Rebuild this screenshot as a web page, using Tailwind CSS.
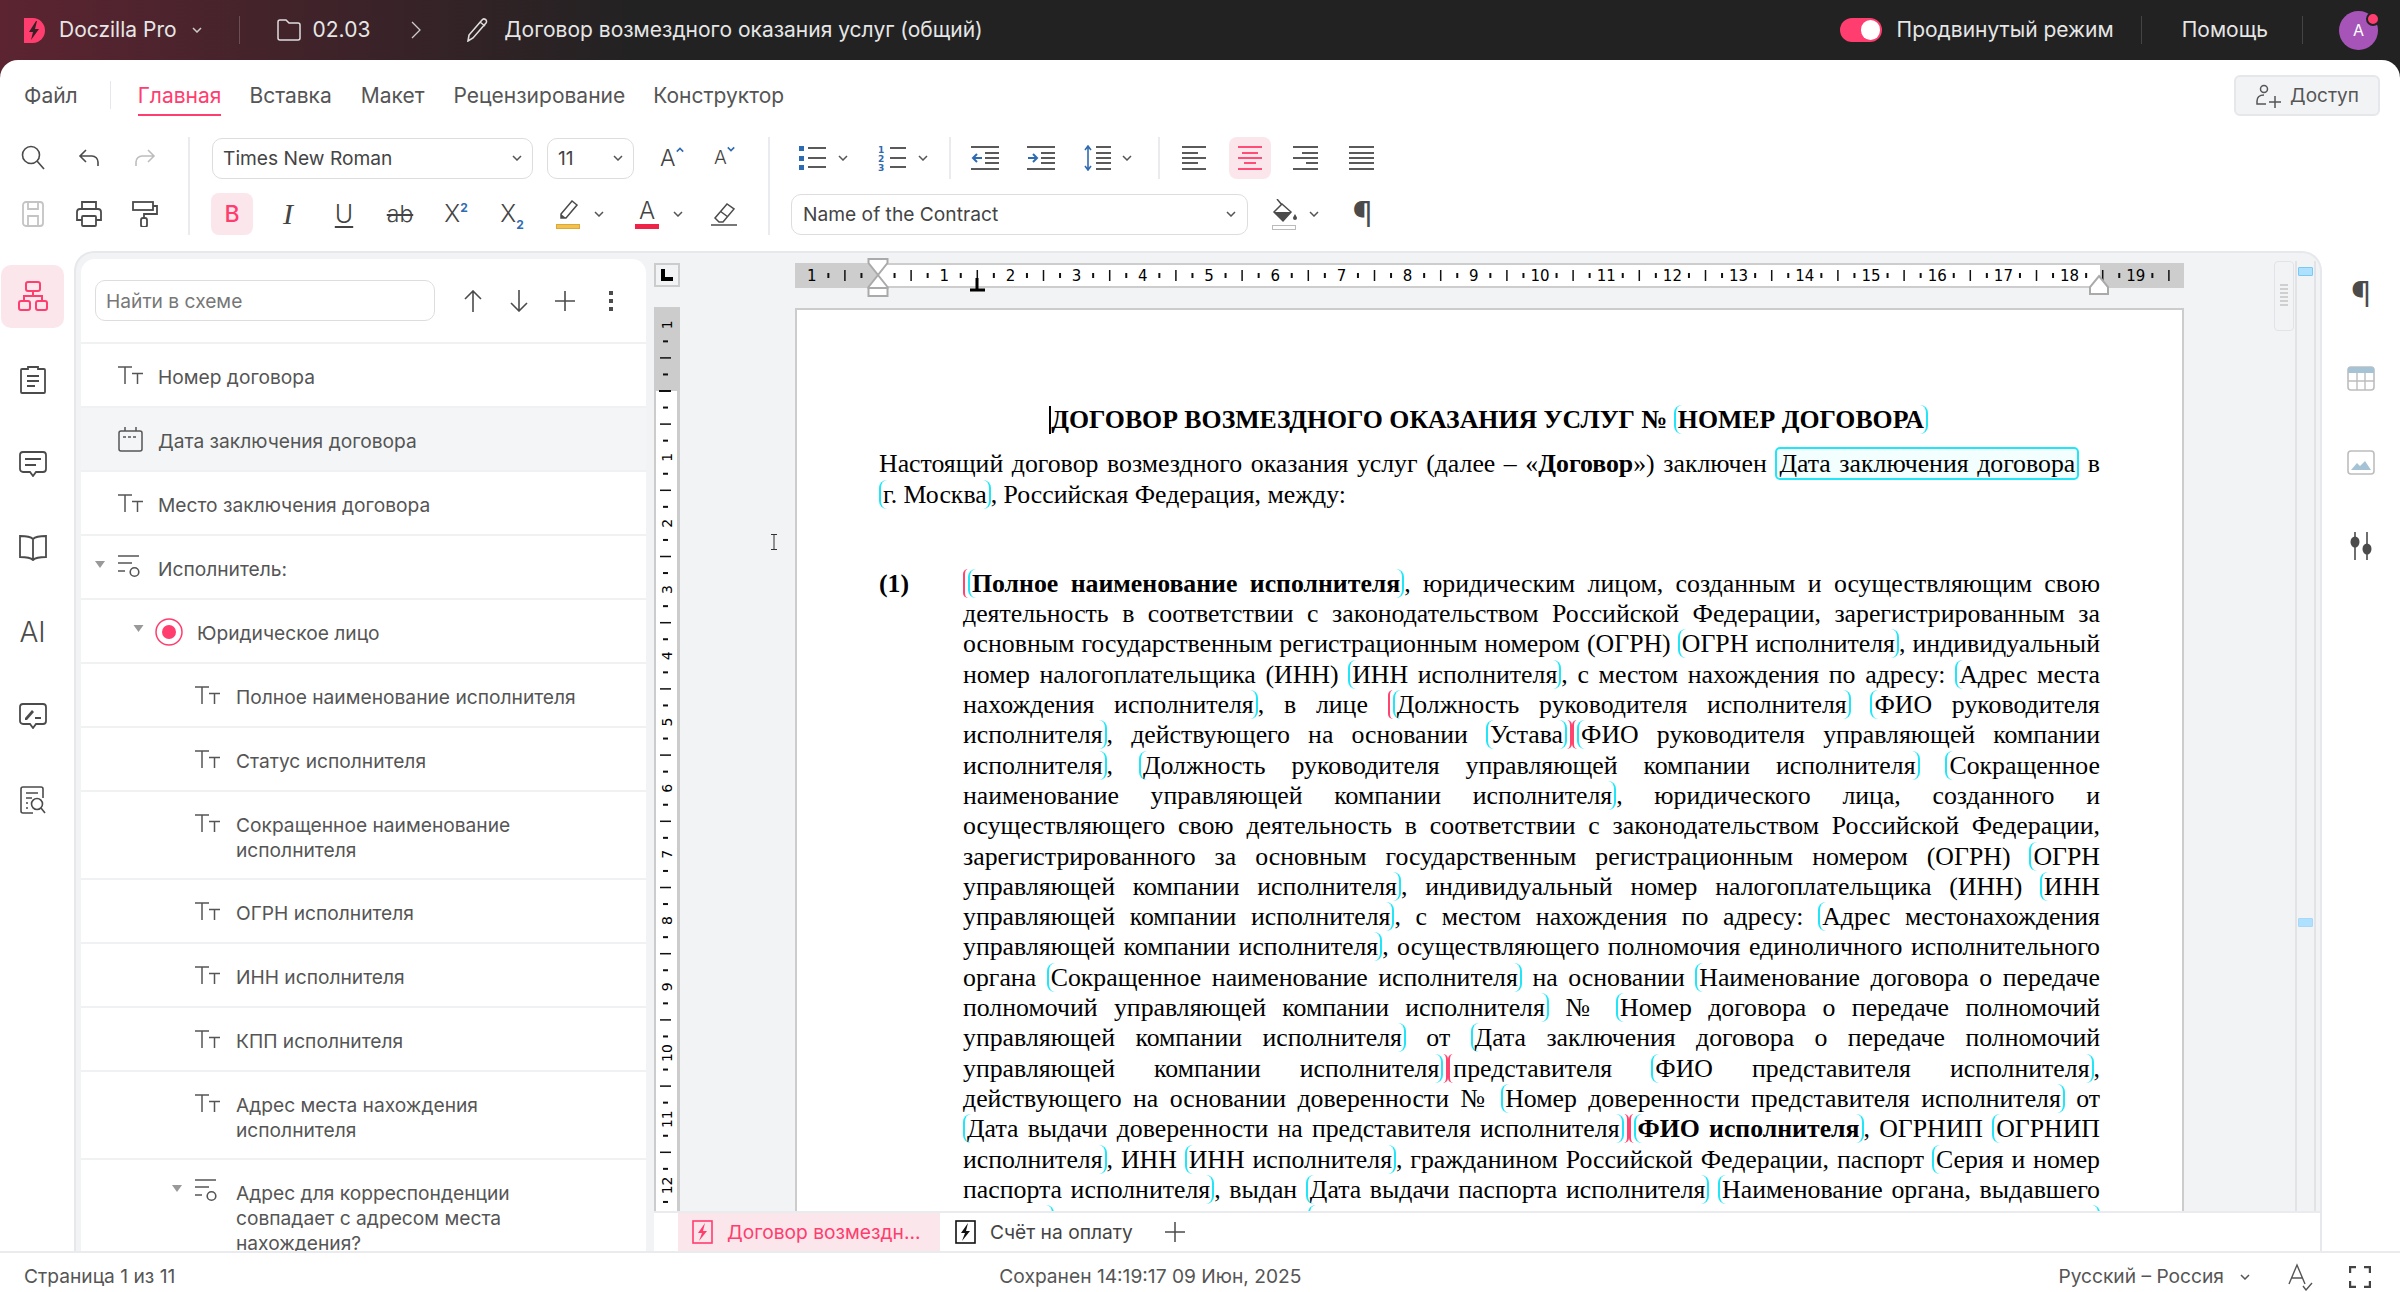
<!DOCTYPE html>
<html lang="ru">
<head>
<meta charset="UTF-8">
<title>Doczilla Pro</title>
<script src="https://cdn.jsdelivr.net/npm/@tailwindcss/browser@4"></script>
</head>
<body class="w-[2400px] h-[1292px] overflow-hidden flex flex-col font-[Inter,sans-serif] text-[20px] text-[#444] bg-[linear-gradient(90deg,#5c2431_0px,#222222_640px)]">

<svg class="hidden">
  <symbol id="tt" viewBox="0 0 25 18"><g fill="none" stroke="#555" stroke-width="1.5"><path d="M0 1H14M7 1V18M14 7.5H25M19.5 7.5V18"/></g></symbol>
  <symbol id="grp" viewBox="0 0 22 24"><g fill="none" stroke="#555" stroke-width="1.6"><path d="M0 1H21M0 8H14M0 16H7"/><circle cx="16.5" cy="17" r="4.3"/></g></symbol>
  <symbol id="chev" viewBox="0 0 10 6"><path d="M1 1l4 4 4-4" fill="none" stroke="#555" stroke-width="1.5"/></symbol>
  <symbol id="tri" viewBox="0 0 10 7"><path d="M0 0H10L5 7Z" fill="#999"/></symbol>
</svg>

<!-- top bar -->
<header class="h-[60px] shrink-0 flex items-center text-[21px] text-[#e6e6e6]">
  <svg class="ml-[24px] w-[21px] h-[25px]" viewBox="0 0 21 25"><path d="M0 0H9a12 12.500 0 0 1 0 25H0Z" fill="#ff3d6e"/><path d="M12 3L5 14h4l-2 8 8-11h-4l2-8Z" fill="#3a1f25"/></svg>
  <span class="ml-[14px]">Doczilla Pro</span>
  <svg class="ml-[15px] w-[10px] h-[6px]" viewBox="0 0 10 6"><path d="M1 1l4 4 4-4" fill="none" stroke="#ccc" stroke-width="1.5"/></svg>
  <div class="ml-[37px] w-px h-[28px] bg-[#6a5055]"></div>
  <svg class="ml-[37px] w-[24px] h-[22px]" viewBox="0 0 24 22"><path d="M1 3a2 2 0 0 1 2-2h6l3 3h9a2 2 0 0 1 2 2v13a2 2 0 0 1-2 2H3a2 2 0 0 1-2-2Z" fill="none" stroke="#ddd" stroke-width="1.5"/></svg>
  <span class="ml-[12px]">02.03</span>
  <svg class="ml-[41px] w-[10px] h-[18px]" viewBox="0 0 10 18"><path d="M1 1l8 8-8 8" fill="none" stroke="#ccc" stroke-width="1.3"/></svg>
  <svg class="ml-[44px] w-[24px] h-[24px]" viewBox="0 0 24 24"><path d="M3 23l1-6L17 2a2.500 2.500 0 0 1 4 3L8 20Z M15 4l5 4" fill="none" stroke="#ddd" stroke-width="1.6"/></svg>
  <span class="ml-[15px]">Договор возмездного оказания услуг (общий)</span>
  <div class="ml-auto w-[42px] h-[24px] rounded-full bg-[#ff3d6e] flex items-center justify-end pr-[2px]"><div class="w-[19px] h-[20px] rounded-full bg-white"></div></div>
  <span class="ml-[15px]">Продвинутый режим</span>
  <div class="ml-[27px] w-px h-[28px] bg-[#444]"></div>
  <span class="ml-[40px]">Помощь</span>
  <div class="ml-[34px] w-px h-[28px] bg-[#444]"></div>
  <div class="relative ml-[36px] mr-[22px] w-[39px] h-[39px] rounded-full bg-[#a654b8] flex items-center justify-center text-[16px] text-white">A
    <div class="absolute top-[1px] right-[-2px] w-[14px] h-[14px] rounded-full bg-[#ff3d6e] border-2 border-[#222]"></div>
  </div>
</header>

<main class="flex-1 min-h-0 flex flex-col bg-white rounded-t-[18px]">
  <!-- menu tabs -->
  <nav class="h-[77px] shrink-0 flex items-start pt-[24px] text-[21px] leading-[24px] text-[#555]">
    <span class="ml-[24px]">Файл</span>
    <div class="ml-[32px] w-px h-[28px] mt-[-3px] bg-[#e5e7ea]"></div>
    <span class="ml-[27px] pb-[6px] border-b-2 border-[#ff3d6e] text-[#ff3d6e]">Главная</span>
    <span class="ml-[28px]">Вставка</span>
    <span class="ml-[29px]">Макет</span>
    <span class="ml-[29px]">Рецензирование</span>
    <span class="ml-[28px]">Конструктор</span>
    <button class="ml-auto mr-[20px] mt-[-9px] w-[146px] h-[41px] flex items-center justify-center gap-[9px] rounded-[6px] bg-[#f2f3f5] border-2 border-[#e5e7ea] text-[#555] text-[19px]">
      <svg class="w-[26px] h-[24px]" viewBox="0 0 26 24"><g fill="none" stroke="#555" stroke-width="1.5"><circle cx="9" cy="5" r="3.500"/><path d="M9 11c-5 0-7 3-7 6v3h9M14 18H26M20 12V24"/></g></svg>Доступ
    </button>
  </nav>

  <!-- toolbar -->
  <div class="h-[98px] mb-[16px] shrink-0 flex">
    <div class="w-[188px] flex flex-col justify-between pl-[5px]">
      <div class="flex h-[42px]">
        <div class="w-[56px] flex items-center justify-center"><svg class="w-[24px] h-[26px]" viewBox="0 0 24 26"><g fill="none" stroke="#4b4b4b" stroke-width="1.6"><circle cx="10" cy="10" r="8.500"/><path d="M16 16l7 8"/></g></svg></div>
        <div class="w-[56px] flex items-center justify-center"><svg class="w-[22px] h-[18px]" viewBox="0 0 22 18"><path d="M8 1L2 7l6 6M2 7H14a6 6 0 0 1 6 6v4" fill="none" stroke="#4b4b4b" stroke-width="1.6"/></svg></div>
        <div class="w-[56px] flex items-center justify-center"><svg class="w-[22px] h-[18px]" viewBox="0 0 22 18"><path d="M14 1l6 6-6 6M20 7H8a6 6 0 0 0-6 6v4" fill="none" stroke="#bdbdbd" stroke-width="1.6"/></svg></div>
      </div>
      <div class="flex h-[42px]">
        <div class="w-[56px] flex items-center justify-center"><svg class="w-[22px] h-[26px]" viewBox="0 0 22 26"><g fill="none" stroke="#c4c4c4" stroke-width="1.800"><rect x="1" y="1" width="20" height="24" rx="3"/><path d="M6 1V8H16V1M6 25V15H16V25"/></g></svg></div>
        <div class="w-[56px] flex items-center justify-center"><svg class="w-[26px] h-[26px]" viewBox="0 0 26 26"><g fill="none" stroke="#4b4b4b" stroke-width="1.800"><path d="M6 8V1H20V8M6 19H1V11a3 3 0 0 1 3-3H22a3 3 0 0 1 3 3V19H20"/><rect x="6" y="15" width="14" height="10" rx="1"/></g></svg></div>
        <div class="w-[56px] flex items-center justify-center"><svg class="w-[26px] h-[26px]" viewBox="0 0 26 26"><g fill="none" stroke="#4b4b4b" stroke-width="1.800"><rect x="1" y="1" width="20" height="8"/><path d="M21 5h4v8H12v4"/><rect x="9" y="17" width="6" height="9" rx="2"/></g></svg></div>
      </div>
    </div>
    <div class="w-[2px] bg-[#e9ebee]"></div>
    <div class="w-[578px] flex flex-col justify-between">
      <div class="flex items-center h-[42px]">
        <div class="ml-[22px] w-[321px] h-[41px] flex items-center justify-between px-[10px] rounded-[10px] border border-[#ddd] text-[19.200px]">Times New Roman<svg class="w-[10px] h-[6px]"><use href="#chev"/></svg></div>
        <div class="ml-[14px] w-[87px] h-[41px] flex items-center justify-between px-[10px] rounded-[10px] border border-[#ddd] text-[19.200px]">11<svg class="w-[10px] h-[6px]"><use href="#chev"/></svg></div>
        <div class="ml-[26px] w-[26px] flex items-start text-[23px] font-light leading-[26px]">A<svg class="w-[8px] h-[6px] mt-[2px]" viewBox="0 0 10 6"><path d="M1 5l4-4 4 4" fill="none" stroke="#2f6bb0" stroke-width="2"/></svg></div>
        <div class="ml-[28px] w-[26px] flex items-start text-[19px] font-light leading-[26px]">A<svg class="w-[8px] h-[6px] mt-[1px]" viewBox="0 0 10 6"><path d="M1 1l4 4 4-4" fill="none" stroke="#2f6bb0" stroke-width="2"/></svg></div>
      </div>
      <div class="flex items-center h-[42px] pl-[14px]">
        <div class="w-[56px] flex justify-center"><span class="w-[42px] h-[42px] rounded-[8px] bg-[#fbe6ec] flex items-center justify-center text-[#ff3d6e] text-[23px] font-medium">B</span></div>
        <div class="w-[56px] text-center text-[30px] leading-[34px] font-['Liberation_Serif',serif] italic">I</div>
        <div class="w-[56px] text-center text-[25px] leading-[34px] font-light underline underline-offset-[3px]">U</div>
        <div class="w-[56px] text-center text-[23px] font-light line-through">ab</div>
        <div class="w-[56px] flex justify-center text-[24px] font-light leading-[28px]">X<sup class="text-[12px] font-bold text-[#2f6bb0] top-[-2px] leading-[20px]">2</sup></div>
        <div class="w-[56px] flex justify-center text-[24px] font-light leading-[28px]">X<sub class="text-[12px] font-bold text-[#2f6bb0] top-[20px] leading-[10px]">2</sub></div>
        <div class="w-[56px] flex flex-col items-center"><svg class="w-[22px] h-[22px]" viewBox="0 0 22 22"><path d="M4 14L15 1l5 4L9 18H4Z" fill="none" stroke="#4b4b4b" stroke-width="1.5"/><path d="M4 14l5 4H4Z" fill="#4b4b4b"/></svg><div class="w-[24px] h-[5px] mt-[2px] bg-[#f2c14e] border border-[#d9a93a]"></div></div>
        <svg class="ml-[-2px] w-[10px] h-[6px]"><use href="#chev"/></svg>
        <div class="ml-[15px] w-[56px] flex flex-col items-center text-[24px] font-light leading-[24px]">A<div class="w-[24px] h-[5px] mt-[1px] bg-[#ef2348]"></div></div>
        <svg class="ml-[-2px] w-[10px] h-[6px]"><use href="#chev"/></svg>
        <div class="ml-[13px] w-[56px] flex justify-center"><svg class="w-[26px] h-[24px]" viewBox="0 0 26 24"><g fill="none" stroke="#4b4b4b" stroke-width="1.5"><path d="M4 16L16 2l7 5-11 13H8ZM9 9l8 6"/><path d="M0 23H26"/></g></svg></div>
      </div>
    </div>
    <div class="w-[2px] bg-[#e9ebee]"></div>
    <div class="flex-1 flex flex-col justify-between">
      <div class="flex items-center h-[42px]">
        <svg class="ml-[29px] w-[27px] h-[24px]" viewBox="0 0 27 24"><path d="M0 0H5V5H0ZM0 10H5V15H0ZM0 19H5V24H0Z" fill="#2f6bb0"/><path d="M9 2H27M9 12H27M9 21H27" stroke="#5a5a5a" stroke-width="2"/></svg>
        <svg class="ml-[12px] w-[10px] h-[6px]"><use href="#chev"/></svg>
        <svg class="ml-[30px] w-[28px] h-[26px]" viewBox="0 0 28 26"><g fill="#2f6bb0" font-size="9" font-weight="700" font-family="DejaVu Sans"><text x="0" y="8">1</text><text x="0" y="17">2</text><text x="0" y="26">3</text></g><path d="M12 3H28M12 13H28M12 22H28" stroke="#5a5a5a" stroke-width="2"/></svg>
        <svg class="ml-[12px] w-[10px] h-[6px]"><use href="#chev"/></svg>
        <div class="ml-[21px] w-[2px] h-[42px] bg-[#e9ebee]"></div>
        <svg class="ml-[20px] w-[28px] h-[24px]" viewBox="0 0 28 24"><path d="M0 1H28M14 7H28M14 12H28M14 17H28M0 23H28" stroke="#5a5a5a" stroke-width="2"/><path d="M11 12H2M6 8l-4 4 4 4" fill="none" stroke="#2f6bb0" stroke-width="2"/></svg>
        <svg class="ml-[28px] w-[28px] h-[24px]" viewBox="0 0 28 24"><path d="M0 1H28M14 7H28M14 12H28M14 17H28M0 23H28" stroke="#5a5a5a" stroke-width="2"/><path d="M1 12H10M6 8l4 4-4 4" fill="none" stroke="#2f6bb0" stroke-width="2"/></svg>
        <svg class="ml-[29px] w-[27px] h-[26px]" viewBox="0 0 27 26"><path d="M12 2H27M12 8H27M12 13H27M12 18H27M12 24H27" stroke="#5a5a5a" stroke-width="2"/><path d="M4 2V24M1 5l3-4 3 4M1 21l3 4 3-4" fill="none" stroke="#2f6bb0" stroke-width="1.6"/></svg>
        <svg class="ml-[11px] w-[10px] h-[6px]"><use href="#chev"/></svg>
        <div class="ml-[26px] w-[2px] h-[42px] bg-[#e9ebee]"></div>
        <svg class="ml-[22px] w-[24px] h-[24px]" viewBox="0 0 24 24"><path d="M0 1H24M0 7H16M0 12H24M0 17H16M0 23H24" stroke="#5a5a5a" stroke-width="2"/></svg>
        <div class="ml-[23px] w-[42px] h-[42px] rounded-[8px] bg-[#fbe6ec] flex items-center justify-center"><svg class="w-[24px] h-[24px]" viewBox="0 0 24 24"><path d="M0 1H24M4 7H20M0 12H24M6 17H18M0 23H24" stroke="#ff4d78" stroke-width="2"/></svg></div>
        <svg class="ml-[22px] w-[25px] h-[24px]" viewBox="0 0 25 24"><path d="M0 1H25M9 7H25M0 12H25M13 17H25M0 23H25" stroke="#5a5a5a" stroke-width="2"/></svg>
        <svg class="ml-[31px] w-[25px] h-[24px]" viewBox="0 0 25 24"><path d="M0 1H25M0 7H25M0 12H25M0 17H25M0 23H25" stroke="#5a5a5a" stroke-width="2"/></svg>
      </div>
      <div class="flex items-center h-[42px]">
        <div class="ml-[21px] w-[457px] h-[41px] flex items-center justify-between px-[11px] rounded-[10px] border border-[#ddd] text-[19.200px]">Name of the Contract<svg class="w-[10px] h-[6px]"><use href="#chev"/></svg></div>
        <div class="ml-[23px] w-[26px] flex flex-col items-center"><svg class="w-[26px] h-[24px]" viewBox="0 0 26 24"><path d="M6 0l5 6M11 5l9 8-8 9-9-9Z" fill="none" stroke="#4b4b4b" stroke-width="1.5"/><path d="M3 13H20l-8 9Z" fill="#4b4b4b"/><path d="M24 15c-1 2-2 3-2 4a2 2 0 0 0 4 0c0-1-1-2-2-4Z" fill="#4b4b4b"/></svg><div class="w-[24px] h-[5px] mt-[2px] bg-white border border-[#bbb]"></div></div>
        <svg class="ml-[12px] w-[10px] h-[6px]"><use href="#chev"/></svg>
        <div class="ml-[33px] text-[36px] font-light leading-[30px] text-[#4b4b4b]">¶</div>
      </div>
    </div>
  </div>

  <div class="flex-1 min-h-0 flex">
    <!-- left rail -->
    <aside class="w-[74px] shrink-0 flex flex-col pt-[3px] pl-px">
      <div class="w-[63px] h-[84px] flex items-center justify-center"><div class="w-[63px] h-[63px] rounded-[10px] bg-[#fbe6ec] flex items-center justify-center"><svg class="w-[30px] h-[30px]" viewBox="0 0 30 30"><g fill="none" stroke="#ff3d6e" stroke-width="2"><rect x="8" y="1" width="14" height="9" rx="2"/><rect x="1" y="20" width="11" height="9" rx="2"/><rect x="18" y="20" width="11" height="9" rx="2"/><path d="M15 10V15M6 20V15H24V20"/></g></svg></div></div>
      <div class="w-[63px] h-[84px] flex items-center justify-center"><svg class="w-[26px] h-[28px]" viewBox="0 0 26 28"><g fill="none" stroke="#4b4b4b" stroke-width="1.8"><path d="M8 3H2a1 1 0 0 0-1 1V26a1 1 0 0 0 1 1H24a1 1 0 0 0 1-1V4a1 1 0 0 0-1-1H18V1H8ZM7 10H19M7 15H19M7 20H15"/></g></svg></div>
      <div class="w-[63px] h-[84px] flex items-center justify-center"><svg class="w-[28px] h-[26px]" viewBox="0 0 28 26"><g fill="none" stroke="#4b4b4b" stroke-width="1.8"><path d="M4 1H24a3 3 0 0 1 3 3V18a3 3 0 0 1-3 3H17l-3 4-3-4H4a3 3 0 0 1-3-3V4a3 3 0 0 1 3-3ZM6 8H22M6 14H17"/></g></svg></div>
      <div class="w-[63px] h-[84px] flex items-center justify-center"><svg class="w-[28px] h-[26px]" viewBox="0 0 28 26"><g fill="none" stroke="#4b4b4b" stroke-width="1.8"><path d="M14 4C12 2 8 1 1 1V22C8 22 12 23 14 25 16 23 20 22 27 22V1C20 1 16 2 14 4ZM14 4V25"/></g></svg></div>
      <div class="w-[63px] h-[84px] flex items-center justify-center text-[28px] font-light text-[#4b4b4b]">AI</div>
      <div class="w-[63px] h-[84px] flex items-center justify-center"><svg class="w-[28px] h-[26px]" viewBox="0 0 28 26"><g fill="none" stroke="#4b4b4b" stroke-width="1.8"><path d="M4 1H24a3 3 0 0 1 3 3V18a3 3 0 0 1-3 3H17l-3 4-3-4H4a3 3 0 0 1-3-3V4a3 3 0 0 1 3-3ZM16 15H22"/></g><path d="M6 15l7-8 2 2-7 8H6Z" fill="#4b4b4b"/></svg></div>
      <div class="w-[63px] h-[84px] flex items-center justify-center"><svg class="w-[26px] h-[28px]" viewBox="0 0 26 28"><g fill="none" stroke="#4b4b4b" stroke-width="1.6"><path d="M13 27H3a2 2 0 0 1-2-2V3a2 2 0 0 1 2-2H21a2 2 0 0 1 2 2V12M6 7H18M6 12H12M6 17H8M6 22H8"/><circle cx="17" cy="18" r="5.500"/><path d="M21 22l4 5"/></g></svg></div>
    </aside>

    <!-- workspace -->
    <section class="w-[2248px] shrink-0 flex bg-[#f2f3f5] border-t-2 border-l-2 border-r-2 border-[#e6e8eb] rounded-t-[20px] overflow-hidden">
      <!-- schema panel -->
      <div class="ml-[5px] mt-[6px] w-[565px] shrink-0 bg-white rounded-t-[14px] overflow-hidden text-[19.200px] leading-[25px] text-[#555]">
        <div class="h-[85px] border-b-2 border-[#f0f1f3] pt-[21px] pl-[14px] flex items-start">
          <div class="w-[340px] h-[41px] rounded-[10px] border border-[#ddd] flex items-center pl-[10px] pt-px text-[#777]">Найти в схеме</div>
          <svg class="ml-[29px] mt-[10px] w-[18px] h-[22px]" viewBox="0 0 18 22"><path d="M9 22V1M1 9l8-8 8 8" fill="none" stroke="#4b4b4b" stroke-width="1.6"/></svg>
          <svg class="ml-[28px] mt-[10px] w-[18px] h-[22px]" viewBox="0 0 18 22"><path d="M9 0V21M1 13l8 8 8-8" fill="none" stroke="#4b4b4b" stroke-width="1.6"/></svg>
          <svg class="ml-[26px] mt-[10px] w-[22px] h-[22px]" viewBox="0 0 22 22"><path d="M11 1V21M1 11H21" stroke="#4b4b4b" stroke-width="1.6"/></svg>
          <svg class="ml-[33px] mt-[11px] w-[4px] h-[20px]" viewBox="0 0 4 20"><path d="M0 0H4V4H0ZM0 8H4V12H0ZM0 16H4V20H0Z" fill="#4b4b4b"/></svg>
        </div>
        <div class="flex h-[64px] border-b-2 border-[#f0f1f3] pt-[21px] pl-[37px]"><svg class="w-[25px] h-[18px] mt-px mr-[15px]"><use href="#tt"/></svg>Номер договора</div>
        <div class="flex h-[64px] border-b-2 border-[#f0f1f3] pt-[21px] pl-[37px] bg-[#f4f5f7]"><svg class="w-[25px] h-[25px] mt-[-2px] mr-[15px]" viewBox="0 0 25 25"><g fill="none" stroke="#555" stroke-width="1.5"><rect x="1" y="4" width="23" height="20" rx="2"/><path d="M7 0V4M18 0V4"/><path d="M5 10H20" stroke-dasharray="3 2"/></g></svg>Дата заключения договора</div>
        <div class="flex h-[64px] border-b-2 border-[#f0f1f3] pt-[21px] pl-[37px]"><svg class="w-[25px] h-[18px] mt-px mr-[15px]"><use href="#tt"/></svg>Место заключения договора</div>
        <div class="flex h-[64px] border-b-2 border-[#f0f1f3] pt-[21px] pl-[14px]"><svg class="w-[10px] h-[7px] mt-[4px] mr-[13px]"><use href="#tri"/></svg><svg class="w-[22px] h-[24px] mt-[-2px] mr-[18px]"><use href="#grp"/></svg>Исполнитель:</div>
        <div class="flex h-[64px] border-b-2 border-[#f0f1f3] pt-[21px] pl-[52px]"><svg class="w-[11px] h-[7px] mt-[4px] mr-[11px]"><use href="#tri"/></svg><svg class="w-[28px] h-[28px] mt-[-3px] mr-[14px]" viewBox="0 0 28 28"><circle cx="14" cy="14" r="13" fill="none" stroke="#ff3d6e" stroke-width="1.5"/><circle cx="14" cy="14" r="7" fill="#ff3d6e"/></svg>Юридическое лицо</div>
        <div class="flex h-[64px] border-b-2 border-[#f0f1f3] pt-[21px] pl-[114px]"><svg class="w-[25px] h-[18px] mt-px mr-[16px]"><use href="#tt"/></svg>Полное наименование исполнителя</div>
        <div class="flex h-[64px] border-b-2 border-[#f0f1f3] pt-[21px] pl-[114px]"><svg class="w-[25px] h-[18px] mt-px mr-[16px]"><use href="#tt"/></svg>Статус исполнителя</div>
        <div class="flex h-[88px] border-b-2 border-[#f0f1f3] pt-[21px] pl-[114px]"><svg class="w-[25px] h-[18px] mt-px mr-[16px]"><use href="#tt"/></svg><span>Сокращенное наименование<br>исполнителя</span></div>
        <div class="flex h-[64px] border-b-2 border-[#f0f1f3] pt-[21px] pl-[114px]"><svg class="w-[25px] h-[18px] mt-px mr-[16px]"><use href="#tt"/></svg>ОГРН исполнителя</div>
        <div class="flex h-[64px] border-b-2 border-[#f0f1f3] pt-[21px] pl-[114px]"><svg class="w-[25px] h-[18px] mt-px mr-[16px]"><use href="#tt"/></svg>ИНН исполнителя</div>
        <div class="flex h-[64px] border-b-2 border-[#f0f1f3] pt-[21px] pl-[114px]"><svg class="w-[25px] h-[18px] mt-px mr-[16px]"><use href="#tt"/></svg>КПП исполнителя</div>
        <div class="flex h-[88px] border-b-2 border-[#f0f1f3] pt-[21px] pl-[114px]"><svg class="w-[25px] h-[18px] mt-px mr-[16px]"><use href="#tt"/></svg><span>Адрес места нахождения<br>исполнителя</span></div>
        <div class="flex h-[100px] pt-[21px] pl-[91px]"><svg class="w-[10px] h-[7px] mt-[4px] mr-[13px]"><use href="#tri"/></svg><svg class="w-[22px] h-[24px] mt-[-2px] mr-[19px]"><use href="#grp"/></svg><span>Адрес для корреспонденции<br>совпадает с адресом места<br>нахождения?</span></div>
      </div>

      <!-- document area -->
      <div class="ml-[8px] flex-1 min-w-0 flex flex-col">
        <div class="relative flex-1 min-h-0 flex overflow-hidden">
          <div class="w-[26px] shrink-0 pt-[10px] flex flex-col gap-[20px]">
            <div class="h-[25px] bg-[#f2f3f5] border-2 border-[#ccc] flex items-center justify-center"><svg class="w-[12px] h-[12px]" viewBox="0 0 12 12"><path d="M0 0H4V8H12V12H0Z" fill="#000"/></svg></div>
            <svg id="vruler" class="w-[26px] h-[904px] shrink-0" viewBox="0 0 26 904"></svg>
          </div>
          <div class="ml-[115px] w-[1389px] shrink-0 pt-[10px] flex flex-col gap-[20px]">
            <svg id="hruler" class="w-[1389px] h-[25px] shrink-0 overflow-visible" viewBox="0 0 1389 25"></svg>
            <!-- page -->
            <article class="flex-1 bg-white border-t-2 border-x-2 border-[#ccc] pt-[95px] pl-[82px] pr-[82px] font-['Liberation_Serif',serif] text-[25.800px] leading-[30.300px] text-black [&_mark]:bg-transparent [&_mark]:text-inherit [&_mark]:border-x-2 [&_mark]:border-[#22e6f7] [&_mark]:rounded-[8px] [&_mark]:px-[2px]">
              <div class="text-center font-bold"><span class="inline-block w-[2px] h-[28px] ml-[-2px] bg-black align-[-6px]"></span>ДОГОВОР ВОЗМЕЗДНОГО ОКАЗАНИЯ УСЛУГ № <mark>НОМЕР ДОГОВОРА</mark></div>
              <div class="mt-[14px] [text-align-last:justify]">Настоящий договор возмездного оказания услуг (далее – «<b>Договор</b>») заключен <mark class="border-2! rounded-[5px]! bg-[#f3feff]!">Дата заключения договора</mark> в</div>
              <div><mark>г. Москва</mark>, Российская Федерация, между:</div>

              <div class="mt-[59px] flex">
                <b class="w-[84px] shrink-0">(1)</b>
                <div class="flex-1 min-w-0 [&>div]:[text-align-last:justify] [&>div]:whitespace-nowrap">
                  <div><span class="border-l-2 border-[#ff4470] rounded-l-[8px] pl-[3px]"></span><mark><b>Полное наименование исполнителя</b></mark>, юридическим лицом, созданным и осуществляющим свою</div>
                  <div>деятельность в соответствии с законодательством Российской Федерации, зарегистрированным за</div>
                  <div>основным государственным регистрационным номером (ОГРН) <mark>ОГРН исполнителя</mark>, индивидуальный</div>
                  <div>номер налогоплательщика (ИНН) <mark>ИНН исполнителя</mark>, с местом нахождения по адресу: <mark class="border-r-0! pr-0!">Адрес места</mark></div>
                  <div><mark class="border-l-0! pl-0!">нахождения исполнителя</mark>, в лице <span class="border-l-2 border-[#ff4470] rounded-l-[8px] pl-[3px]"></span><mark>Должность руководителя исполнителя</mark> <mark class="border-r-0! pr-0!">ФИО руководителя</mark></div>
                  <div><mark class="border-l-0! pl-0!">исполнителя</mark>, действующего на основании <mark>Устава</mark><span class="border-r-2 border-[#ff4470] rounded-r-[8px] pr-[3px]"></span><span class="border-l-2 border-[#ff4470] rounded-l-[8px] pl-[3px]"></span><mark class="border-r-0! pr-0!">ФИО руководителя управляющей компании</mark></div>
                  <div><mark class="border-l-0! pl-0!">исполнителя</mark>, <mark>Должность руководителя управляющей компании исполнителя</mark> <mark class="border-r-0! pr-0!">Сокращенное</mark></div>
                  <div><mark class="border-l-0! pl-0!">наименование управляющей компании исполнителя</mark>, юридического лица, созданного и</div>
                  <div>осуществляющего свою деятельность в соответствии с законодательством Российской Федерации,</div>
                  <div>зарегистрированного за основным государственным регистрационным номером (ОГРН) <mark class="border-r-0! pr-0!">ОГРН</mark></div>
                  <div><mark class="border-l-0! pl-0!">управляющей компании исполнителя</mark>, индивидуальный номер налогоплательщика (ИНН) <mark class="border-r-0! pr-0!">ИНН</mark></div>
                  <div><mark class="border-l-0! pl-0!">управляющей компании исполнителя</mark>, с местом нахождения по адресу: <mark class="border-r-0! pr-0!">Адрес местонахождения</mark></div>
                  <div><mark class="border-l-0! pl-0!">управляющей компании исполнителя</mark>, осуществляющего полномочия единоличного исполнительного</div>
                  <div>органа <mark>Сокращенное наименование исполнителя</mark> на основании <mark class="border-r-0! pr-0!">Наименование договора о передаче</mark></div>
                  <div><mark class="border-l-0! pl-0!">полномочий управляющей компании исполнителя</mark> № <mark class="border-r-0! pr-0!">Номер договора о передаче полномочий</mark></div>
                  <div><mark class="border-l-0! pl-0!">управляющей компании исполнителя</mark> от <mark class="border-r-0! pr-0!">Дата заключения договора о передаче полномочий</mark></div>
                  <div><mark class="border-l-0! pl-0!">управляющей компании исполнителя</mark><span class="border-r-2 border-[#ff4470] rounded-r-[8px] pr-[3px]"></span><span class="border-l-2 border-[#ff4470] rounded-l-[8px] pl-[3px]"></span>представителя <mark>ФИО представителя исполнителя</mark>,</div>
                  <div>действующего на основании доверенности № <mark>Номер доверенности представителя исполнителя</mark> от</div>
                  <div><mark>Дата выдачи доверенности на представителя исполнителя</mark><span class="border-r-2 border-[#ff4470] rounded-r-[8px] pr-[3px]"></span><span class="border-l-2 border-[#ff4470] rounded-l-[8px] pl-[3px]"></span><mark><b>ФИО исполнителя</b></mark>, ОГРНИП <mark class="border-r-0! pr-0!">ОГРНИП</mark></div>
                  <div><mark class="border-l-0! pl-0!">исполнителя</mark>, ИНН <mark>ИНН исполнителя</mark>, гражданином Российской Федерации, паспорт <mark class="border-r-0! pr-0!">Серия и номер</mark></div>
                  <div><mark class="border-l-0! pl-0!">паспорта исполнителя</mark>, выдан <mark>Дата выдачи паспорта исполнителя</mark> <mark class="border-r-0! pr-0!">Наименование органа, выдавшего</mark></div>
                  <div><mark class="border-l-0! pl-0!">паспорт</mark> исполнителя <mark>Код подразделения, выдавшего паспорт исполнителя</mark></div>
                </div>
              </div>
            </article>
          </div>
          <!-- doc scrollbars -->
          <div class="ml-[90px] mt-[8px] w-[20px] h-[70px] shrink-0 rounded-[4px] bg-[#f2f3f5] border border-[#e2e3e6] flex flex-col items-center justify-center gap-[2px]">
            <div class="w-[8px] h-[24px] bg-[repeating-linear-gradient(180deg,#cfcfcf_0px,#cfcfcf_2px,transparent_2px,transparent_4px)]"></div>
          </div>
          <div class="relative ml-px mt-[8px] w-[21px] shrink-0 border-x-2 border-[#e2e3e6]">
            <div class="absolute top-[6px] left-[1px] w-[15px] h-[9px] rounded-[1px] bg-[#aee0ff] border border-[#7cc8f5]"></div>
            <div class="absolute top-[657px] left-[1px] w-[15px] h-[9px] rounded-[1px] bg-[#aee0ff] border border-[#a8d8f5]"></div>
          </div>
          <!-- text cursor -->
          <svg class="absolute left-[116px] top-[281px] w-[8px] h-[16px]" viewBox="0 0 8 16"><path d="M1 .5H7M4 .5V15.500M1 15.500H7" fill="none" stroke="#333"/></svg>
        </div>
        <!-- document tabs -->
        <div class="h-[40px] shrink-0 bg-white border-t-2 border-[#e9ebee] flex items-center">
          <div class="ml-[24px] w-[262px] h-full bg-[#fbe6ec] flex items-center pl-[14px] text-[#ff3d6e] text-[19.200px]">
            <svg class="w-[21px] h-[24px]" viewBox="0 0 21 24"><rect x="1" y="1" width="19" height="22" fill="none" stroke="#ff3d6e" stroke-width="1.6"/><path d="M13 3L6 13h4l-3 8 8-10h-4l2-8Z" fill="#ff3d6e"/></svg>
            <span class="ml-[14px]">Договор возмездн...</span>
          </div>
          <div class="ml-[15px] flex items-center text-[19.200px]">
            <svg class="w-[21px] h-[24px]" viewBox="0 0 21 24"><rect x="1" y="1" width="19" height="22" fill="none" stroke="#111" stroke-width="1.6"/><path d="M13 3L6 13h4l-3 8 8-10h-4l2-8Z" fill="#111"/></svg>
            <span class="ml-[14px]">Счёт на оплату</span>
            <svg class="ml-[32px] w-[20px] h-[20px]" viewBox="0 0 20 20"><path d="M10 0V20M0 10H20" stroke="#4b4b4b" stroke-width="1.5"/></svg>
          </div>
        </div>
      </div>
    </section>

    <!-- right rail -->
    <aside class="flex-1 flex flex-col items-center pt-px">
      <div class="h-[84px] flex items-center justify-center text-[36px] font-light text-[#4b4b4b]">¶</div>
      <div class="h-[84px] flex items-center justify-center"><svg class="w-[28px] h-[25px]" viewBox="0 0 28 25"><rect x="1" y="1" width="26" height="23" rx="3" fill="none" stroke="#bdbdbd" stroke-width="1.6"/><path d="M1 4a3 3 0 0 1 3-3H24a3 3 0 0 1 3 3V7H1Z" fill="#a6c3d6"/><path d="M1 15H27M10 7V24M18 7V24" stroke="#bdbdbd" stroke-width="1.4"/></svg></div>
      <div class="h-[84px] flex items-center justify-center"><svg class="w-[28px] h-[25px]" viewBox="0 0 28 25"><rect x="1" y="1" width="26" height="23" rx="3" fill="none" stroke="#bdbdbd" stroke-width="1.6"/><path d="M4 20L10 13l3 3 5-5 6 9Z" fill="#a6c3d6"/></svg></div>
      <div class="h-[84px] flex items-center justify-center"><svg class="w-[22px] h-[28px]" viewBox="0 0 22 28"><path d="M5 0V28M17 0V28" stroke="#4b4b4b" stroke-width="1.600"/><ellipse cx="5" cy="10" rx="4.500" ry="5.500" fill="#4b4b4b"/><ellipse cx="17" cy="17" rx="4.500" ry="5.500" fill="#4b4b4b"/></svg></div>
    </aside>
  </div>

  <!-- status bar -->
  <footer class="h-[41px] shrink-0 bg-white border-t-2 border-[#e9ebee] flex items-center pt-[8px] text-[19.200px] text-[#555]">
    <span class="ml-[24px]">Страница 1 из 11</span>
    <span class="ml-[824px]">Сохранен 14:19:17 09 Июн, 2025</span>
    <span class="ml-auto">Русский – Россия</span>
    <svg class="ml-[16px] w-[10px] h-[6px]"><use href="#chev"/></svg>
    <svg class="ml-[38px] w-[26px] h-[28px]" viewBox="0 0 26 28"><path d="M1 21L9 2l8 19M4 15H14M15 23l3 4 6-7" fill="none" stroke="#555" stroke-width="1.4"/></svg>
    <svg class="ml-[35px] mr-[29px] w-[22px] h-[22px]" viewBox="0 0 22 22"><path d="M1 7V1H7M15 1H21V7M21 15V21H15M7 21H1V15" fill="none" stroke="#444" stroke-width="2.400"/></svg>
  </footer>
</main>

<script>
  // ruler ticks and numbers, one cm = 66.2px
  const NS = 'http://www.w3.org/2000/svg';
  const CM = 66.2;

  function add(parent, tag, attrs, text) {
    const el = document.createElementNS(NS, tag);
    for (const k in attrs) el.setAttribute(k, attrs[k]);
    if (text !== undefined) el.textContent = text;
    parent.appendChild(el);
  }

  const hr = document.getElementById('hruler');
  add(hr, 'rect', { x: 0, y: 0, width: 1389, height: 25, fill: '#cdcdcd' });
  add(hr, 'rect', { x: 83, y: 2, width: 1222, height: 21, fill: '#fff' });
  for (let k = -4; k <= 80; k++) {
    const x = 83 + k * CM / 4;
    if (x < 6 || x > 1380) continue;
    if (k % 4 === 0) {
      if (k !== 0) add(hr, 'text', { x, y: 18, 'text-anchor': 'middle', 'font-size': 15, 'font-family': 'DejaVu Sans', fill: '#000' }, Math.abs(k / 4));
    } else if (Math.abs(k % 4) === 2) {
      add(hr, 'rect', { x: x - 0.75, y: 7, width: 1.5, height: 11, fill: '#111' });
    } else {
      add(hr, 'rect', { x: x - 1, y: 10, width: 2, height: 5, fill: '#111' });
    }
  }
  // indent markers
  add(hr, 'path', { d: 'M73.500 -4H92.500V0L83 12 92.500 24V25H73.500V24L83 12 73.500 0Z', fill: '#fff', stroke: '#aaa', 'stroke-width': 2 });
  add(hr, 'rect', { x: 73.500, y: 25, width: 19, height: 8, fill: '#fff', stroke: '#aaa', 'stroke-width': 2 });
  add(hr, 'path', { d: 'M1304 13L1313 24V31H1295V24Z', fill: '#fff', stroke: '#aaa', 'stroke-width': 2 });
  add(hr, 'path', { d: 'M182 15V26M175 27H190', stroke: '#000', 'stroke-width': 3, fill: 'none' });

  const vr = document.getElementById('vruler');
  add(vr, 'rect', { x: 0, y: 0, width: 26, height: 904, fill: '#ccc' });
  add(vr, 'rect', { x: 2, y: 84, width: 21, height: 820, fill: '#fff' });
  for (let k = -4; k <= 52; k++) {
    const y = 84 + k * CM / 4;
    if (y < 6 || y > 900) continue;
    if (k % 4 === 0) {
      if (k !== 0) add(vr, 'text', { x: 0, y: 0, transform: `translate(18 ${y}) rotate(-90)`, 'text-anchor': 'middle', 'font-size': 14, 'font-family': 'DejaVu Sans', fill: '#000' }, Math.abs(k / 4));
      else add(vr, 'rect', { x: 5, y: y - 1, width: 12, height: 2, fill: '#111' });
    } else if (Math.abs(k % 4) === 2) {
      add(vr, 'rect', { x: 6, y: y - 0.75, width: 11, height: 1.5, fill: '#111' });
    } else {
      add(vr, 'rect', { x: 9, y: y - 1, width: 5, height: 2, fill: '#111' });
    }
  }
</script>
</body>
</html>
